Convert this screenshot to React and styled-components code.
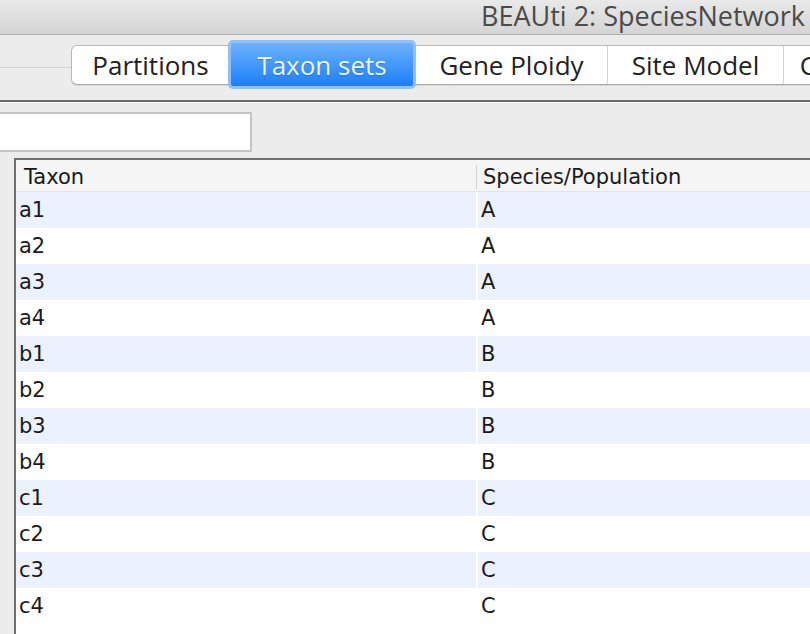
import React from "react";
import styled, { createGlobalStyle } from "styled-components";

const taxa = [
  ["a1", "A"], ["a2", "A"], ["a3", "A"], ["a4", "A"],
  ["b1", "B"], ["b2", "B"], ["b3", "B"], ["b4", "B"],
  ["c1", "C"], ["c2", "C"], ["c3", "C"], ["c4", "C"],
];

const tabs = [
  { label: "Partitions", width: 157 },
  { label: "Taxon sets", width: 188, active: true },
  { label: "Gene Ploidy", width: 191 },
  { label: "Site Model", width: 176 },
  { label: "Clock Model", width: 180 },
];

export default function App() {
  return (
    <>
      <Global />
      <Window>
        <TitleBar>
          <Title>BEAUti 2: SpeciesNetwork</Title>
        </TitleBar>
        <Toolbar>
          <Segmented>
            {tabs.map((t) => (
              <Tab key={t.label} $w={t.width} $active={t.active}>
                {t.label}
              </Tab>
            ))}
          </Segmented>
        </Toolbar>
        <Content>
          <Filter type="text" />
          <Table>
            <HeadRow>
              <HeadCell>Taxon</HeadCell>
              <HeadCell $second>Species/Population</HeadCell>
            </HeadRow>
            {taxa.map(([taxon, species], i) => (
              <Row key={taxon}>
                <Cell $striped={i % 2 === 0}>{taxon}</Cell>
                <Cell $striped={i % 2 === 0}>{species}</Cell>
              </Row>
            ))}
          </Table>
        </Content>
      </Window>
    </>
  );
}

const Global = createGlobalStyle`
  html, body {
    margin: 0;
    padding: 0;
    background: #ececec;
    overflow: hidden;
  }
  * {
    box-sizing: border-box;
  }
`;

const Window = styled.div`
  width: 810px;
  height: 634px;
  overflow: hidden;
  display: flex;
  flex-direction: column;
  background: #ececec;
  font-family: "Open Sans", "Liberation Sans", sans-serif;
`;

const TitleBar = styled.div`
  height: 35px;
  flex-shrink: 0;
  display: flex;
  align-items: center;
  justify-content: flex-end;
  padding-right: 5px;
  background: linear-gradient(#e9e9e9, #d4d4d4);
  border-bottom: 1px solid #aeaeae;
  overflow: hidden;
`;

const Title = styled.div`
  font-size: 27px;
  line-height: 34px;
  color: #4a4a4a;
  white-space: nowrap;
  margin-top: -2px;
`;

const Toolbar = styled.div`
  height: 67px;
  flex-shrink: 0;
  padding: 10px 0 0 71px;
  background-color: #ececec;
  background-image: linear-gradient(
    to bottom,
    transparent 32px,
    #d3d3d3 32px,
    #d3d3d3 33px,
    transparent 33px
  );
  border-bottom: 2px solid #6b6b6b;
  overflow: hidden;
`;

const Segmented = styled.div`
  display: inline-flex;
  height: 40px;
  background: #fff;
  border: 1px solid #b9b9b9;
  border-bottom-color: #a8a8a8;
  border-radius: 6px 0 0 6px;
  box-shadow: 0 1px 1px rgba(0, 0, 0, 0.08);
  white-space: nowrap;
`;

const Tab = styled.div`
  flex: 0 0 ${(p) => p.$w}px;
  display: flex;
  align-items: center;
  justify-content: center;
  font-size: 26px;
  color: ${(p) => (p.$active ? "#eef5ff" : "#222")};
  border-left: 1px solid #d6d6d6;
  &:first-child {
    border-left: none;
  }
  ${(p) =>
    p.$active &&
    `
    position: relative;
    z-index: 1;
    margin: -6px 0 -5px -1px;
    border: 3px solid #8fc0f8;
    border-radius: 5px;
    background: linear-gradient(#6db2fb, #1b7ffa);
    text-shadow: 0 1px 1px rgba(0, 60, 140, 0.3);
    & + div { border-left: none; }
  `}
`;

const Content = styled.div`
  flex: 1;
  display: flex;
  flex-direction: column;
  border-top: 1px solid #f7f7f7;
  padding-top: 9px;
`;

const Filter = styled.input`
  width: 252px;
  height: 40px;
  margin: 0;
  background: #fff;
  border: 2px solid #c4c4c4;
  border-left: none;
  outline: none;
`;

const Table = styled.div`
  margin: 6px 0 0 14px;
  flex: 1;
  background: #fff;
  border-top: 2px solid #6e6e6e;
  border-left: 2px solid #6e6e6e;
  font-family: "DejaVu Sans", "Liberation Sans", sans-serif;
  font-size: 21px;
  color: #1a1a1a;
`;

const HeadRow = styled.div`
  display: grid;
  grid-template-columns: 460px 1fr;
  height: 32px;
  background: #f5f5f5;
  border-bottom: 1px solid #e4e4e4;
`;

const HeadCell = styled.div`
  display: flex;
  align-items: center;
  padding-left: ${(p) => (p.$second ? 6 : 8)}px;
  border-left: ${(p) => (p.$second ? "1px solid #d2d2d2" : "none")};
  margin: ${(p) => (p.$second ? "5px 0" : "0")};
`;

const Row = styled.div`
  display: grid;
  grid-template-columns: 460px 1fr;
  column-gap: 2px;
  height: 36px;
  background: #fff;
`;

const Cell = styled.div`
  display: flex;
  align-items: center;
  padding-left: 3px;
  background: ${(p) => (p.$striped ? "#ebf2fd" : "transparent")};
`;
